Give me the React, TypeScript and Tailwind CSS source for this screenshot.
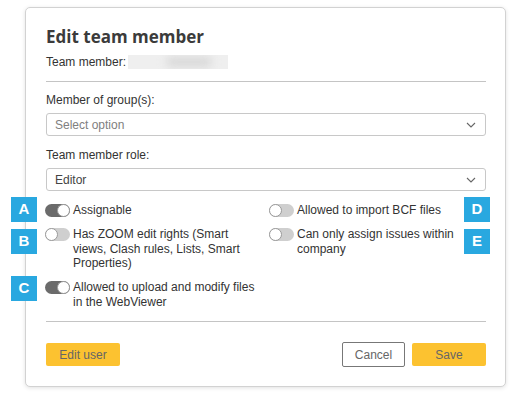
import React from 'react';

const FONT = { fontFamily: '"Liberation Sans", Arial, sans-serif' };

function Toggle({ on }: { on: boolean }) {
  return (
    <div
      className={`relative shrink-0 w-[25px] h-[13px] rounded-full ${on ? 'bg-[#6b6b6b]' : 'bg-[#cfcfcf]'}`}
    >
      <div
        className={`absolute top-0 w-[13px] h-[13px] rounded-full bg-white border border-[#9a9a9a] ${on ? 'right-0' : 'left-0'}`}
      />
    </div>
  );
}

function Option({ on, label, width }: { on: boolean; label: string; width: string }) {
  return (
    <div className="flex items-start gap-[3px]">
      <div className="pt-[1px]">
        <Toggle on={on} />
      </div>
      <span className={`${width} text-[12px] leading-[14.5px] text-[#333]`}>{label}</span>
    </div>
  );
}

function Select({ value, placeholder }: { value: string; placeholder?: boolean }) {
  return (
    <div className="flex items-center justify-between h-[23px] border border-[#c8c8c8] rounded-[3px] pl-2 pr-[9px]">
      <span className={`text-[12px] ${placeholder ? 'text-[#808080]' : 'text-[#444]'}`}>{value}</span>
      <svg width="10" height="6" viewBox="0 0 10 6" fill="none">
        <path d="M1 1l4 4 4-4" stroke="#666" strokeWidth="1.1" />
      </svg>
    </div>
  );
}

function Badge({ letter, className }: { letter: string; className: string }) {
  return (
    <div
      className={`absolute w-[26px] h-[25px] bg-[#29a8e0] text-white text-[15px] font-bold flex items-center justify-center ${className}`}
    >
      {letter}
    </div>
  );
}

export default function App() {
  return (
    <div className="relative w-[516px] h-[397px] bg-white overflow-hidden" style={FONT}>
      <div className="ml-[25px] mt-[7px] w-[481px] h-[380px] border border-[#d2d2d2] rounded-[5px] bg-white shadow-[0_1px_4px_rgba(0,0,0,0.12)] pl-5 pr-[19px] pt-[19px] flex flex-col">
        {/* Header */}
        <h2
          className="h-5 leading-5 text-[17px] font-bold text-[#3b3b3b]"
          style={{ fontFamily: '"Open Sans", sans-serif' }}
        >
          Edit team member
        </h2>
        <div className="mt-[8px] flex items-center h-[14px] text-[12px] text-[#333]">
          <span>Team member:</span>
          <div className="relative ml-[2px] w-[100px] h-[14px] bg-[#efefef] overflow-hidden">
            <div className="absolute left-[38px] top-[2px] w-[46px] h-[10px] rounded-full bg-[#d8d8d8] blur-[4px]" />
          </div>
        </div>
        <div className="mt-3 h-px bg-[#c4c4c4]" />

        {/* Fields */}
        <label className="mt-[11px] h-[14px] leading-[14px] text-[12px] text-[#333]">Member of group(s):</label>
        <div className="mt-[6px]">
          <Select value="Select option" placeholder />
        </div>
        <label className="mt-3 h-[14px] leading-[14px] text-[12px] text-[#333]">Team member role:</label>
        <div className="mt-[6px]">
          <Select value="Editor" />
        </div>

        {/* Permissions */}
        <div className="mt-3 grid grid-cols-[224px_1fr] -ml-px">
          <div className="flex flex-col gap-[9.5px]">
            <Option on label="Assignable" width="max-w-[185px]" />
            <Option on={false} label="Has ZOOM edit rights (Smart views, Clash rules, Lists, Smart Properties)" width="max-w-[185px]" />
            <Option on label="Allowed to upload and modify files in the WebViewer" width="max-w-[185px]" />
          </div>
          <div className="flex flex-col gap-[9.5px]">
            <Option on={false} label="Allowed to import BCF files" width="max-w-[165px]" />
            <Option on={false} label="Can only assign issues within company" width="max-w-[165px]" />
          </div>
        </div>
        <div className="mt-3 h-px bg-[#c4c4c4]" />

        {/* Footer */}
        <div className="mt-5 flex items-center justify-between">
          <button className="w-[74px] h-[23px] rounded-[2px] bg-[#fcc230] text-[12px] text-[#666]">Edit user</button>
          <div className="flex items-center gap-[7px]">
            <button className="w-[63px] h-[25px] rounded-[2px] border border-[#777] bg-white text-[12px] text-[#666]">
              Cancel
            </button>
            <button className="w-[74px] h-[23px] rounded-[2px] bg-[#fcc230] text-[12px] text-[#666]">Save</button>
          </div>
        </div>
      </div>

      <Badge letter="A" className="left-[11px] top-[197px]" />
      <Badge letter="B" className="left-[11px] top-[229px]" />
      <Badge letter="C" className="left-[11px] top-[276px]" />
      <Badge letter="D" className="left-[464px] top-[197px]" />
      <Badge letter="E" className="left-[464px] top-[229px]" />
    </div>
  );
}
